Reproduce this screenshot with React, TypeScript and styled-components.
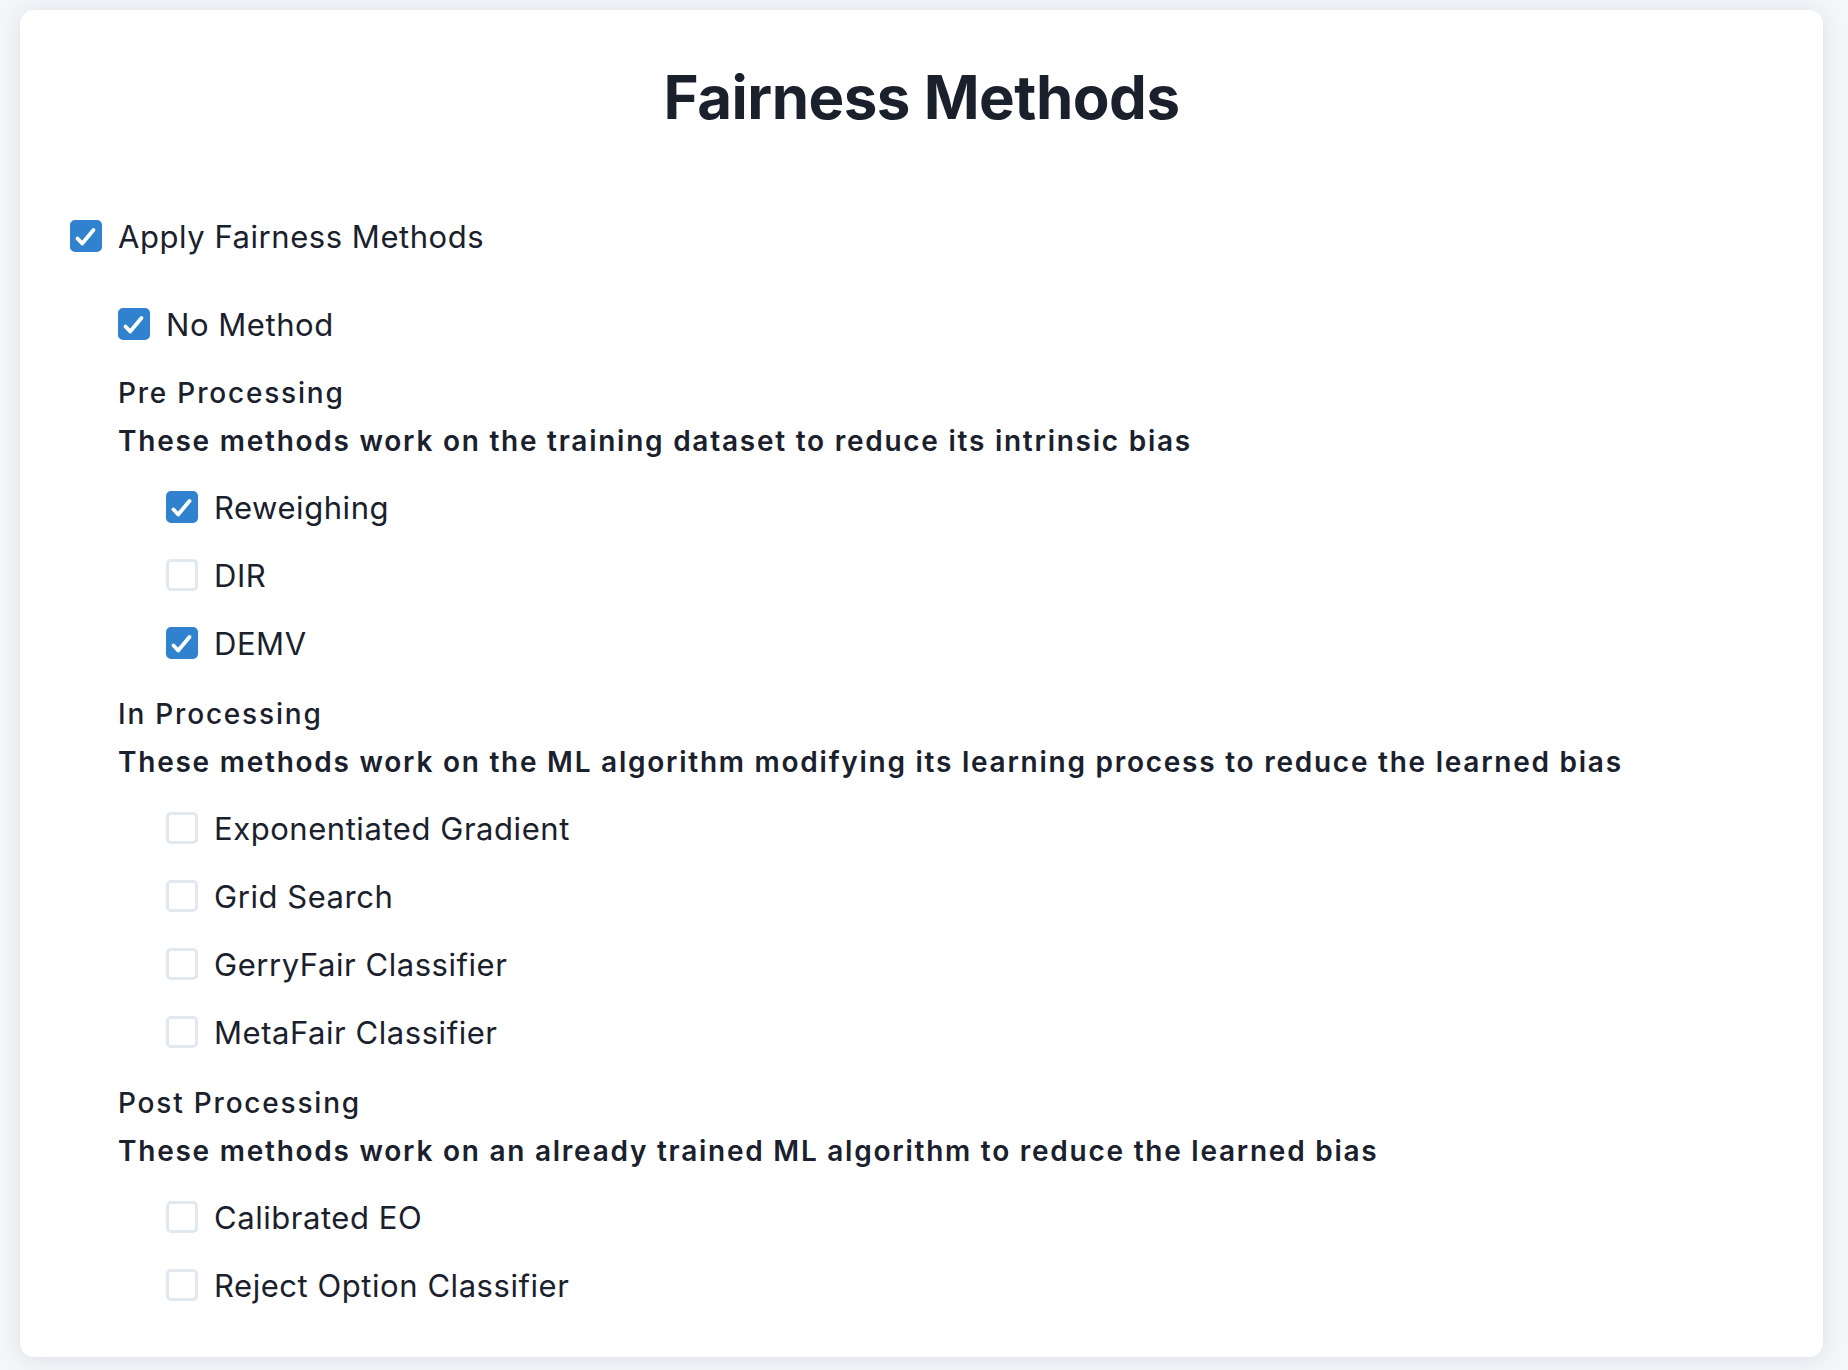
import React, { FC } from "react";
import styled, { createGlobalStyle } from "styled-components";

const GlobalStyle = createGlobalStyle`
  html, body {
    margin: 0;
    padding: 0;
    background: #f4f7fa;
  }
  body {
    font-family: Inter, "Noto Sans", "Liberation Sans", sans-serif;
    color: #1a202c;
  }
  * {
    box-sizing: border-box;
  }
`;

const Page = styled.div`
  padding: 10px 25px 13px 20px;
  min-height: 1370px;
`;

const Card = styled.section`
  background: #ffffff;
  border-radius: 14px;
  box-shadow: 0 2px 22px rgba(15, 23, 42, 0.11);
  padding: 51px 50px 38px 50px;
`;

const Title = styled.h1`
  margin: 0 0 69px 0;
  text-align: center;
  font-size: 60px;
  line-height: 72px;
  font-weight: 700;
  letter-spacing: -0.5px;
`;

const Nested = styled.div`
  margin-left: 48px;
`;

const Row = styled.label`
  display: flex;
  align-items: center;
  gap: 16px;
  height: 68px;
  cursor: pointer;
  font-size: 31px;
  font-weight: 400;
  letter-spacing: 0.55px;
`;

const Box = styled.span<{ $checked: boolean }>`
  flex: 0 0 auto;
  width: 32px;
  height: 32px;
  border-radius: 5px;
  display: flex;
  align-items: center;
  justify-content: center;
  background: ${({ $checked }) => ($checked ? "#3182ce" : "#ffffff")};
  border: 3px solid ${({ $checked }) => ($checked ? "#3182ce" : "#e2e8f0")};
`;

const MasterGap = styled.div`
  height: 20px;
`;

const Section = styled.div`
  margin-top: 11px;

  & + & {
    margin-top: 13px;
  }
`;

const Heading = styled.div`
  font-size: 28px;
  line-height: 48px;
  font-weight: 500;
  letter-spacing: 1.8px;
`;

const Description = styled.div`
  font-size: 28px;
  line-height: 48px;
  font-weight: 600;
  letter-spacing: 1.75px;
  margin-bottom: 8px;
`;

const CheckIcon: FC = () => (
  <svg width="26" height="26" viewBox="0 0 26 26" fill="none">
    <polyline
      points="4.5,15.5 9.2,20.5 20.5,7"
      stroke="#ffffff"
      strokeWidth="3.8"
      strokeLinecap="round"
      strokeLinejoin="round"
    />
  </svg>
);

type CheckItemProps = {
  label: string;
  checked: boolean;
};

const CheckItem: FC<CheckItemProps> = ({ label, checked }) => (
  <Row>
    <Box $checked={checked}>{checked && <CheckIcon />}</Box>
    <span>{label}</span>
  </Row>
);

type Method = { label: string; checked: boolean };

type Group = {
  title: string;
  description: string;
  methods: Method[];
};

const groups: Group[] = [
  {
    title: "Pre Processing",
    description:
      "These methods work on the training dataset to reduce its intrinsic bias",
    methods: [
      { label: "Reweighing", checked: true },
      { label: "DIR", checked: false },
      { label: "DEMV", checked: true },
    ],
  },
  {
    title: "In Processing",
    description:
      "These methods work on the ML algorithm modifying its learning process to reduce the learned bias",
    methods: [
      { label: "Exponentiated Gradient", checked: false },
      { label: "Grid Search", checked: false },
      { label: "GerryFair Classifier", checked: false },
      { label: "MetaFair Classifier", checked: false },
    ],
  },
  {
    title: "Post Processing",
    description:
      "These methods work on an already trained ML algorithm to reduce the learned bias",
    methods: [
      { label: "Calibrated EO", checked: false },
      { label: "Reject Option Classifier", checked: false },
    ],
  },
];

const App: FC = () => {
  return (
    <>
      <GlobalStyle />
      <Page>
        <Card>
          <Title>Fairness Methods</Title>
          <CheckItem label="Apply Fairness Methods" checked />
          <MasterGap />
          <Nested>
            <CheckItem label="No Method" checked />
            {groups.map((group) => (
              <Section key={group.title}>
                <Heading>{group.title}</Heading>
                <Description>{group.description}</Description>
                <Nested>
                  {group.methods.map((m) => (
                    <CheckItem key={m.label} label={m.label} checked={m.checked} />
                  ))}
                </Nested>
              </Section>
            ))}
          </Nested>
        </Card>
      </Page>
    </>
  );
};

export default App;
